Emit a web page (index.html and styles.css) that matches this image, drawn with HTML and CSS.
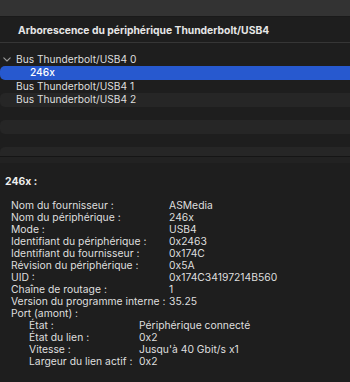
FILE: index.html
```html
<!DOCTYPE html>
<html lang="fr">
<head>
  <meta charset="utf-8">
  <title>Arborescence Thunderbolt/USB4</title>
  <link rel="stylesheet" href="styles.css">
</head>
<body>
  <!-- Window toolbar strip -->
  <div class="toolbar"></div>

  <!-- Device tree -->
  <div class="tree-head">Arborescence du périphérique Thunderbolt/USB4</div>
  <ul class="tree">
    <li class="node">
      <span class="twisty">
        <svg width="8" height="5" viewBox="0 0 8 5"><polyline points="0.8,0.8 4,4 7.2,0.8" fill="none" stroke="#9b9b9b" stroke-width="1.1" stroke-linecap="round" stroke-linejoin="round"/></svg>
      </span>Bus Thunderbolt/USB4 0
    </li>
    <li class="node child selected">246x</li>
    <li class="node leaf">Bus Thunderbolt/USB4 1</li>
    <li class="node leaf">Bus Thunderbolt/USB4 2</li>
    <li class="node"></li>
    <li class="node"></li>
    <li class="node"></li>
    <li class="node"></li>
  </ul>

  <div class="split"></div>

  <!-- Details of the selected device -->
  <section class="detail">
    <h2 class="detail-title">246x :</h2>
    <div class="info">
      <div class="row"><span class="key">Nom du fournisseur :</span><span class="val">ASMedia</span></div>
      <div class="row"><span class="key">Nom du périphérique :</span><span class="val">246x</span></div>
      <div class="row"><span class="key">Mode :</span><span class="val">USB4</span></div>
      <div class="row"><span class="key">Identifiant du périphérique :</span><span class="val">0x2463</span></div>
      <div class="row"><span class="key">Identifiant du fournisseur :</span><span class="val">0x174C</span></div>
      <div class="row"><span class="key">Révision du périphérique :</span><span class="val">0x5A</span></div>
      <div class="row"><span class="key">UID :</span><span class="val">0x174C34197214B560</span></div>
      <div class="row"><span class="key">Chaîne de routage :</span><span class="val">1</span></div>
      <div class="row"><span class="key">Version du programme interne :</span><span class="val">35.25</span></div>
      <div class="row"><span class="key">Port (amont) :</span></div>
      <div class="sub">
        <div class="row"><span class="key">État :</span><span class="val">Périphérique connecté</span></div>
        <div class="row"><span class="key">État du lien :</span><span class="val">0x2</span></div>
        <div class="row"><span class="key">Vitesse :</span><span class="val">Jusqu'à 40 Gbit/s x1</span></div>
        <div class="row"><span class="key">Largeur du lien actif :</span><span class="val">0x2</span></div>
      </div>
    </div>
  </section>
</body>
</html>
```

FILE: styles.css
```css
/* Reset */
* {
  padding: 0;
  margin: 0;
  box-sizing: border-box;
}

body {
  background-color: #1e1e1e;
  color: #dedede;
  font-family: Inter, 'Liberation Sans', sans-serif;
  font-size: 10.2px;
  overflow: hidden;
}

/* Top strip */
.toolbar {
  height: 17px;
  background-color: #333333;
  border-bottom: 1px solid #1a1a1a;
}

/* Tree header */
.tree-head {
  height: 26px;
  padding-left: 18px;
  display: flex;
  align-items: center;
  font-weight: 700;
  font-size: 10.3px;
  color: #e6e6e6;
  border-bottom: 1px solid #363636;
}

/* Tree list */
.tree {
  list-style: none;
  height: 113px;
  padding-top: 9.5px;
  overflow: hidden;
}

.node {
  height: 13.5px;
  line-height: 13.5px;
  padding-left: 16px;
  border-radius: 5px 0 0 5px;
  display: flex;
  align-items: center;
  white-space: nowrap;
}

.node:nth-child(even) {
  background-color: #262626;
}

.node .twisty {
  width: 16px;
  margin-left: -16px;
  display: flex;
  padding-left: 3px;
}

.node.child {
  padding-left: 30px;
}

.node.selected {
  background-color: #2759cf;
  color: #ffffff;
  font-weight: 500;
}

/* Divider between the two panes */
.split {
  height: 7px;
  border-top: 1px solid #151515;
  background-color: #222222;
}

/* Details pane */
.detail {
  padding: 13px 5px 0;
}

.detail-title {
  font-size: 10.4px;
  font-weight: 700;
  line-height: 12px;
  color: #eeeeee;
  margin-bottom: 11.2px;
}

.info {
  padding-left: 6px;
  font-size: 10.35px;
}

.row {
  display: flex;
  line-height: 12px;
  white-space: nowrap;
}

.key {
  width: 158px;
  flex-shrink: 0;
}

.sub {
  padding-left: 18px;
}

.sub .key {
  width: 110px;
}
```
